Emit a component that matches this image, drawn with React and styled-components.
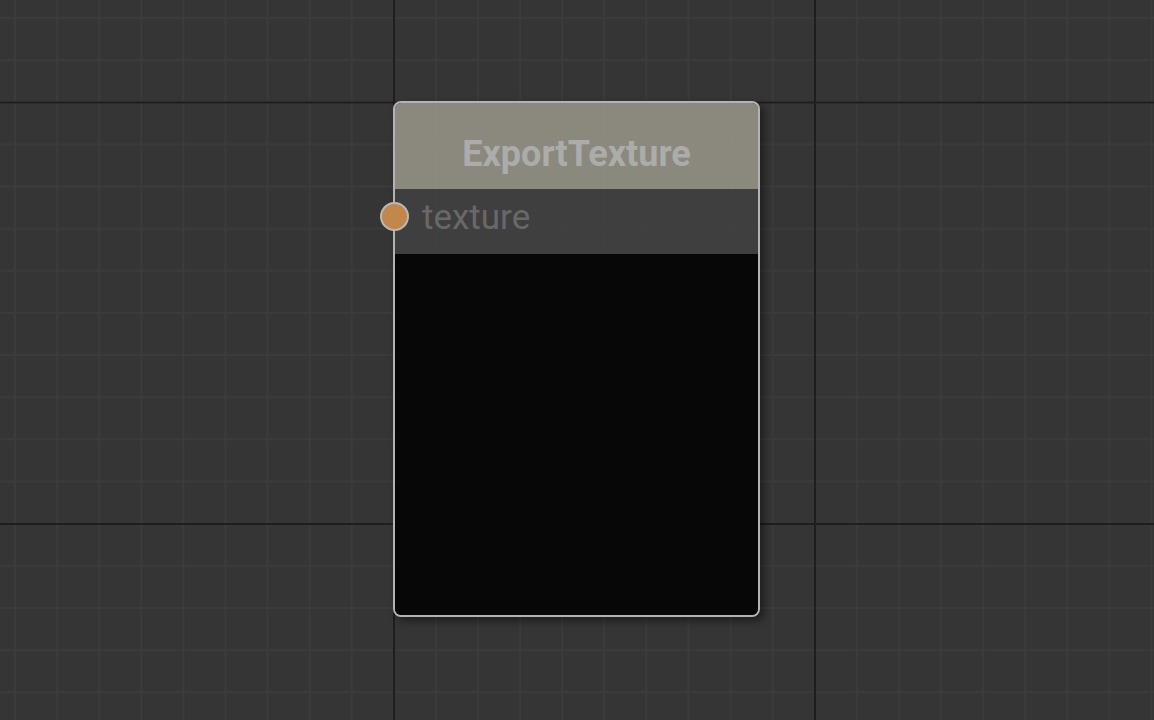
import styled, { createGlobalStyle } from "styled-components"

const GlobalStyle = createGlobalStyle`
  html, body {
    margin: 0;
    padding: 0;
    background: #353535;
  }
  #root {
    height: 720px;
  }
`

const Canvas = styled.div`
  position: relative;
  width: 1154px;
  height: 720px;
  overflow: hidden;
  background-color: #353535;
  background-image:
    linear-gradient(to right, #1e1e1e 0 2px, transparent 2px),
    linear-gradient(to bottom, #1e1e1e 0 2px, transparent 2px),
    linear-gradient(to right, #3b3b3b 0 2px, transparent 2px),
    linear-gradient(to bottom, #3b3b3b 0 2px, transparent 2px);
  background-size: 421px 421.5px, 421px 421.5px, 42.1px 42.15px, 42.1px 42.15px;
  background-position: 393px 101.5px, 393px 101.5px, 14px 17px, 14px 17px;
`

const Node = styled.div`
  position: absolute;
  left: ${p => p.x}px;
  top: ${p => p.y}px;
  width: ${p => p.w}px;
  height: ${p => p.h}px;
  box-sizing: border-box;
  border: 2px solid #b3b3b3;
  border-radius: 8px;
  display: flex;
  flex-direction: column;
  box-shadow: 4px 4px 8px rgba(0, 0, 0, 0.45);
  font-family: Roboto, "Liberation Sans", sans-serif;
`

const Header = styled.div`
  height: 86px;
  flex: none;
  display: flex;
  align-items: center;
  justify-content: center;
  padding-top: 15px;
  box-sizing: border-box;
  background: rgba(154, 151, 137, 0.86);
  border-radius: 6px 6px 0 0;
  color: #acacaa;
  font-weight: 700;
  font-size: 36px;
`

const InputRow = styled.div`
  position: relative;
  height: 65px;
  flex: none;
  display: flex;
  align-items: center;
  box-sizing: border-box;
  padding: 0 0 8px 27px;
  background: rgba(65, 65, 65, 0.88);
  color: #686868;
  font-size: 35px;
`

const Port = styled.span`
  position: absolute;
  left: -15px;
  top: 13px;
  width: 25px;
  height: 25px;
  border-radius: 50%;
  border: 2px solid #b9b9b9;
  background: ${p => p.color};
`

const Preview = styled.div`
  flex: 1;
  background: #070707;
  border-radius: 0 0 6px 6px;
`

export default function App() {
  return (
    <>
      <GlobalStyle />
      <Canvas>
        <Node x={393} y={101} w={367} h={516}>
          <Header>ExportTexture</Header>
          <InputRow>
            <Port color="#c2874a" />
            texture
          </InputRow>
          <Preview />
        </Node>
      </Canvas>
    </>
  )
}
